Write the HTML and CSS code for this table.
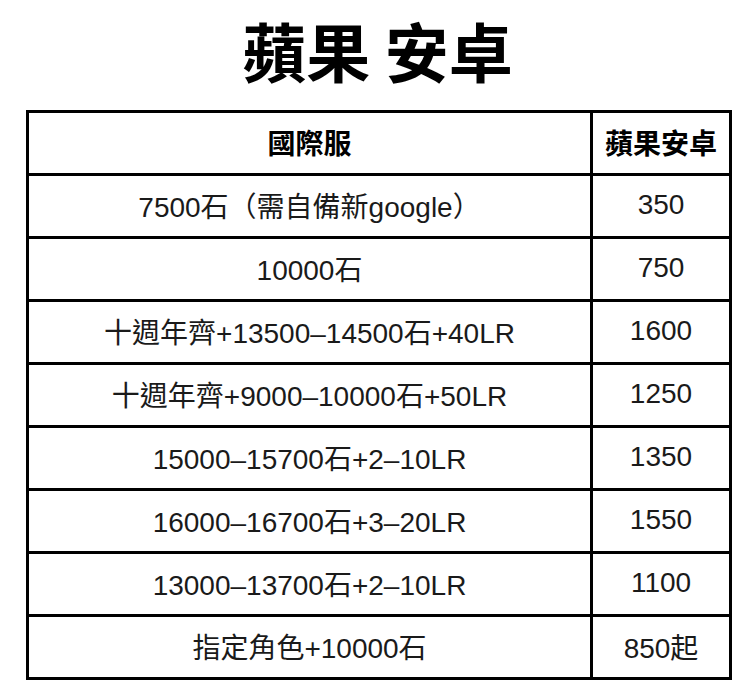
FILE: index.html
```html
<!DOCTYPE html>
<html lang="zh-Hant">
<head>
<meta charset="utf-8">
<link rel="stylesheet" href="styles.css">
</head>
<body>
<div class="page">
  <h1 class="title">蘋果 安卓</h1>
  <table class="price">
    <colgroup><col class="c1"><col class="c2"></colgroup>
    <thead>
      <tr><th>國際服</th><th>蘋果安卓</th></tr>
    </thead>
    <tbody>
      <tr><td>7500石（需自備新google）</td><td>350</td></tr>
      <tr><td>10000石</td><td>750</td></tr>
      <tr><td>十週年齊+13500–14500石+40LR</td><td>1600</td></tr>
      <tr><td>十週年齊+9000–10000石+50LR</td><td>1250</td></tr>
      <tr><td>15000–15700石+2–10LR</td><td>1350</td></tr>
      <tr><td>16000–16700石+3–20LR</td><td>1550</td></tr>
      <tr><td>13000–13700石+2–10LR</td><td>1100</td></tr>
      <tr><td>指定角色+10000石</td><td>850起</td></tr>
    </tbody>
  </table>
</div>
</body>
</html>
```
FILE: styles.css
```css
html, body {
  margin: 0;
  padding: 0;
  background: #fff;
}
body {
  font-family: "Noto Sans CJK TC", "Noto Sans", sans-serif;
  color: #111;
}
.page {
  width: 750px;
  height: 693px;
  padding: 0 0 0 26px;
  box-sizing: border-box;
}
.title {
  margin: 0;
  height: 110px;
  line-height: 98px;
  font-size: 64px;
  font-weight: 700;
  text-align: center;
  width: 703px;
  color: #000;
}
.price {
  border-collapse: collapse;
  width: 703px;
  table-layout: fixed;
}
.price th, .price td {
  border: 3px solid #000;
  height: 58px;
  padding: 0 0 2px;
  text-align: center;
  vertical-align: middle;
}
.price th {
  font-size: 28px;
  font-weight: 700;
  color: #000;
}
.price td {
  font-family: "Liberation Sans", "Noto Sans CJK TC", sans-serif;
  font-size: 28px;
  font-weight: 400;
  color: #1a1a1a;
}
.c1 { width: 564px; }
.c2 { width: 139px; }
```
